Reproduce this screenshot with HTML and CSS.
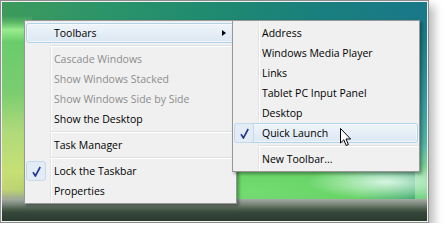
FILE: index.html
```html
<!DOCTYPE html>
<html lang="en">
<head>
<meta charset="UTF-8">
<title>Taskbar menu</title>
<link rel="stylesheet" href="styles.css">
</head>
<body>

<div class="shot">
    <div class="desktop">
        <div class="wallpaper"></div>
        <div class="taskbar"></div>

        <!-- Taskbar context menu -->
        <ul class="menu main">
            <li class="item hot"><span class="mark"></span><span class="label">Toolbars</span><span class="arrow"></span></li>
            <li class="sep"></li>
            <li class="item off"><span class="mark"></span><span class="label">Cascade Windows</span></li>
            <li class="item off"><span class="mark"></span><span class="label">Show Windows Stacked</span></li>
            <li class="item off"><span class="mark"></span><span class="label">Show Windows Side by Side</span></li>
            <li class="item"><span class="mark"></span><span class="label">Show the Desktop</span></li>
            <li class="sep"></li>
            <li class="item"><span class="mark"></span><span class="label">Task Manager</span></li>
            <li class="sep"></li>
            <li class="item">
                <span class="mark on">
                    <svg width="9" height="11" viewBox="0 0 9 11"><path d="M1 6.2 L3.4 10 L8.2 1" fill="none" stroke="#1f3590" stroke-width="1.6"/></svg>
                </span>
                <span class="label">Lock the Taskbar</span>
            </li>
            <li class="item"><span class="mark"></span><span class="label">Properties</span></li>
        </ul>

        <!-- Toolbars submenu -->
        <ul class="menu sub">
            <li class="item"><span class="mark"></span><span class="label">Address</span></li>
            <li class="item"><span class="mark"></span><span class="label">Windows Media Player</span></li>
            <li class="item"><span class="mark"></span><span class="label">Links</span></li>
            <li class="item"><span class="mark"></span><span class="label">Tablet PC Input Panel</span></li>
            <li class="item"><span class="mark"></span><span class="label">Desktop</span></li>
            <li class="item hot">
                <span class="mark on">
                    <svg width="9" height="11" viewBox="0 0 9 11"><path d="M1 6.2 L3.4 10 L8.2 1" fill="none" stroke="#1f3590" stroke-width="1.6"/></svg>
                </span>
                <span class="label">Quick Launch</span>
            </li>
            <li class="sep"></li>
            <li class="item"><span class="mark"></span><span class="label">New Toolbar...</span></li>
        </ul>

        <svg class="cursor" width="12" height="19" viewBox="0 0 12 19">
            <path d="M0.5 0.5 L0.5 15 L3.8 11.8 L6.2 17.5 L8.4 16.6 L6 11 L10.6 11 Z" fill="#fff" stroke="#000" stroke-width="1" stroke-linejoin="round"/>
        </svg>
    </div>
</div>

</body>
</html>
```

FILE: styles.css
```css
body {
    margin: 0;
    background-color: #fff;
    font-family: "Open Sans", "Noto Sans", sans-serif;
}

/* Screenshot frame */
.shot {
    width: 425px;
    height: 219px;
    border: 1px solid #8c8c8c;
    padding: 1px;
    background-color: #f2f2f2;
    box-shadow: 5px 6px 9px rgba(0, 0, 0, 0.28);
}

.desktop {
    position: relative;
    height: 100%;
    display: flex;
    flex-direction: column;
    overflow: hidden;
}

/* Vista wallpaper */
.wallpaper {
    flex: 1;
    background:
        radial-gradient(ellipse 80px 18px at 385px 180px, rgba(230, 252, 240, 0.9), rgba(230, 252, 240, 0)),
        radial-gradient(ellipse 240px 60px at 250px 190px, #74dc70 0%, #66d266 45%, rgba(102, 210, 102, 0) 100%),
        linear-gradient(180deg, rgba(0, 0, 0, 0) 0, rgba(0, 0, 0, 0) 14px, #58b664 20px, #98ec8c 28px, #6acc6a 40px, #7acd70 90px, #b0da7a 130px, #c6e074 170px, #bfd274 188px, #9ea894 197px) left top / 30px 100% no-repeat,
        linear-gradient(180deg, rgba(0, 0, 0, 0) 0, rgba(0, 0, 0, 0) 24px, #1c7f8a 40px, #34999f 95px, #50b4a8 140px, #86d4a6 168px) right top / 12px 100% no-repeat,
        linear-gradient(90deg, #3e9a5c 0%, #2b946a 25%, #1f8a70 50%, #1a7f7e 75%, #197889 100%);
}

.taskbar {
    height: 22px;
    background: linear-gradient(180deg, #a4aca4 0%, #7d897d 22%, #4d5e4e 45%, #34473a 62%, #2b3c2f 100%);
}

/* Context menus */
.menu {
    position: absolute;
    top: 18px;
    margin: 0;
    padding: 2px 1px;
    list-style: none;
    box-sizing: border-box;
    border: 1px solid #979797;
    background:
        linear-gradient(90deg, transparent 25px, #e2e3e3 25px, #e2e3e3 26px, #fff 26px, #fff 27px, transparent 27px),
        #f0f0f0;
    box-shadow: 2px 2px 3px rgba(0, 0, 0, 0.35);
    font-size: 10.5px;
    color: #000;
}

.main {
    left: 22px;
    width: 213px;
}

.sub {
    left: 230px;
    width: 188px;
    z-index: 2;
}

.item {
    display: flex;
    align-items: center;
    height: 20px;
    box-sizing: border-box;
    border: 1px solid transparent;
    border-radius: 3px;
    white-space: nowrap;
}

.item.hot {
    border-color: #b0d4ea;
    background: linear-gradient(180deg, #eef4fa, #dde8f3);
    box-shadow: inset 0 0 0 1px rgba(255, 255, 255, 0.5);
}

.item.off {
    color: #8d8d8d;
}

.mark {
    align-self: stretch;
    width: 20px;
    margin: -1px 8px -1px -1px;
    box-sizing: border-box;
    border-radius: 3px;
    display: flex;
    align-items: center;
    justify-content: center;
}

.mark.on {
    border: 1px solid #c4d9ea;
    background-color: #e3ecf5;
}

.arrow {
    margin-left: auto;
    margin-right: 8px;
    width: 0;
    height: 0;
    border-left: 4px solid #000;
    border-top: 3.5px solid transparent;
    border-bottom: 3.5px solid transparent;
}

.sep {
    height: 6px;
    margin-left: 24px;
    background: linear-gradient(180deg, transparent 2px, #e0e0e0 2px, #e0e0e0 3px, #fff 3px, #fff 4px, transparent 4px);
}

/* Mouse pointer over Quick Launch */
.cursor {
    position: absolute;
    left: 338px;
    top: 126px;
    z-index: 3;
}
```
